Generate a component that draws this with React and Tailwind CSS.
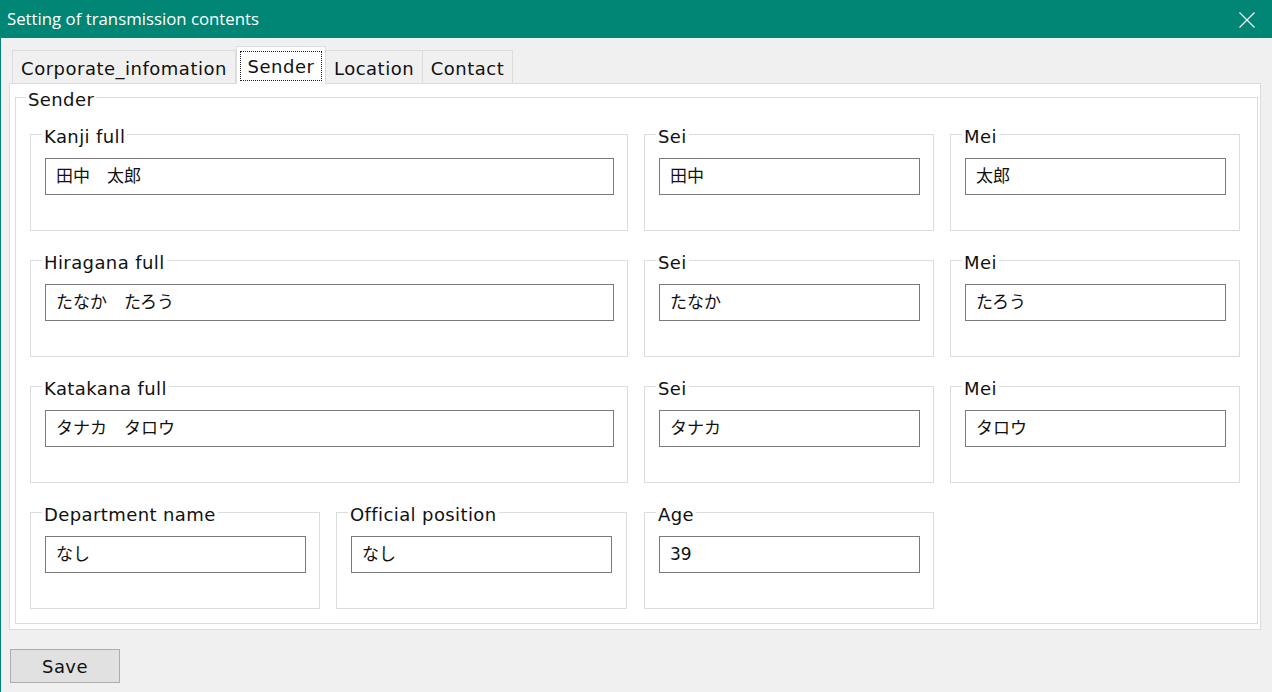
import React from "react";

const FONT = "font-['DejaVu_Sans','Noto_Sans_CJK_JP',sans-serif]";

function GroupBox({ label, className = "", children }) {
  return (
    <div className={"relative border border-[#dcdcdc] bg-white " + className}>
      <span className="absolute left-[11px] top-[-7px] bg-white px-[2px] text-[18px] leading-none tracking-[0.4px] text-[#111] whitespace-nowrap">
        {label}
      </span>
      {children}
    </div>
  );
}

function Field({ label, value, boxW, inputW }) {
  return (
    <GroupBox label={label} className={"h-[97px] shrink-0 pt-[23px] pl-[14px] " + boxW}>
      <div className={"h-[37px] border border-[#7a7a7a] bg-white flex items-center pl-[10px] text-[17px] text-[#111] " + inputW}>
        {value}
      </div>
    </GroupBox>
  );
}

export default function App() {
  return (
    <div className={"w-[1272px] h-[692px] bg-[#f0f0f0] border-l border-[#018574] flex flex-col overflow-hidden " + FONT}>
      {/* Title bar */}
      <div className="h-[38px] shrink-0 bg-[#018574] flex items-center justify-between pl-[6px] pr-[17px]">
        <span className="text-white text-[16.8px] font-['Open_Sans',sans-serif]">Setting of transmission contents</span>
        <svg width="16" height="16" viewBox="0 0 16 16" className="mt-[1px]">
          <path d="M0.5 0.5 L15.5 15.5 M15.5 0.5 L0.5 15.5" stroke="white" strokeWidth="1.1" fill="none" />
        </svg>
      </div>

      {/* Tabs */}
      <div className="mt-[8px] h-[37px] ml-[11px] flex items-end text-[18px] tracking-[0.5px] text-[#111]">
        <div className="w-[224px] h-[33px] border border-b-0 border-[#dcdcdc] bg-[#f0f0f0] flex items-center justify-center pt-[2px]">
          Corporate_infomation
        </div>
        <div className="w-[90px] h-[38px] -mb-[1px] relative z-10 bg-white border border-b-0 border-[#dcdcdc] pl-[3px] pt-[4px]">
          <div className="w-[82px] h-[30px] border border-dotted border-[#222] flex items-center justify-center">
            Sender
          </div>
        </div>
        <div className="w-[97px] h-[33px] border border-l-0 border-b-0 border-[#dcdcdc] bg-[#f0f0f0] flex items-center justify-center pt-[2px]">
          Location
        </div>
        <div className="w-[90px] h-[33px] border border-l-0 border-b-0 border-[#dcdcdc] bg-[#f0f0f0] flex items-center justify-center pt-[2px]">
          Contact
        </div>
      </div>

      {/* Panel */}
      <div className="ml-[8px] w-[1252px] h-[547px] shrink-0 border border-[#dcdcdc] bg-white pt-[13px] pl-[5px]">
        <div className="relative w-[1243px] h-[527px] border border-[#dcdcdc] pt-[36px] pl-[14px]">
          <span className="absolute left-[10px] top-[-7px] bg-white px-[2px] text-[18px] leading-none tracking-[0.4px] text-[#111]">
            Sender
          </span>
          <div className="flex flex-col gap-[29px]">
            <div className="flex gap-[16px]">
              <Field label="Kanji full" value="田中　太郎" boxW="w-[598px]" inputW="w-[569px]" />
              <Field label="Sei" value="田中" boxW="w-[290px]" inputW="w-[261px]" />
              <Field label="Mei" value="太郎" boxW="w-[290px]" inputW="w-[261px]" />
            </div>
            <div className="flex gap-[16px]">
              <Field label="Hiragana full" value="たなか　たろう" boxW="w-[598px]" inputW="w-[569px]" />
              <Field label="Sei" value="たなか" boxW="w-[290px]" inputW="w-[261px]" />
              <Field label="Mei" value="たろう" boxW="w-[290px]" inputW="w-[261px]" />
            </div>
            <div className="flex gap-[16px]">
              <Field label="Katakana full" value="タナカ　タロウ" boxW="w-[598px]" inputW="w-[569px]" />
              <Field label="Sei" value="タナカ" boxW="w-[290px]" inputW="w-[261px]" />
              <Field label="Mei" value="タロウ" boxW="w-[290px]" inputW="w-[261px]" />
            </div>
            <div className="flex">
              <Field label="Department name" value="なし" boxW="w-[290px]" inputW="w-[261px]" />
              <div className="w-[16px] shrink-0" />
              <Field label="Official position" value="なし" boxW="w-[291px]" inputW="w-[261px]" />
              <div className="w-[17px] shrink-0" />
              <Field label="Age" value="39" boxW="w-[290px]" inputW="w-[261px]" />
            </div>
          </div>
        </div>
      </div>

      {/* Save */}
      <div className="mt-[19px] ml-[9px]">
        <button className="w-[110px] h-[34px] bg-[#e1e1e1] border border-[#adadad] text-[18px] tracking-[0.4px] text-[#111] flex items-center justify-center">
          Save
        </button>
      </div>
    </div>
  );
}
